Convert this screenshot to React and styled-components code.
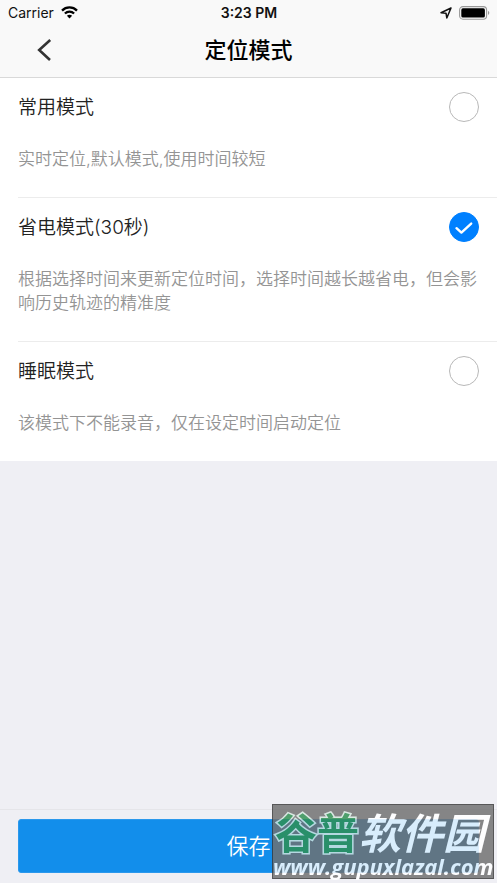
import React, { useState } from 'react';
import styled, { createGlobalStyle } from 'styled-components';

const GlobalStyle = createGlobalStyle`
  * {
    box-sizing: border-box;
  }
  body {
    margin: 0;
    background-color: #efeff4;
    font-family: Inter, "Noto Sans CJK SC", sans-serif;
  }
`;

const Page = styled.div`
  display: flex;
  flex-direction: column;
  min-height: 100vh;
`;

const Header = styled.header`
  background-color: #f9f9f9;
  border-bottom: 1px solid #d9d9d9;
`;

const StatusBar = styled.div`
  display: grid;
  grid-template-columns: 1fr auto 1fr;
  align-items: center;
  height: 25px;
  padding: 0 7px 0 8px;
  font-size: 14px;
  color: #111;
`;

const StatusGroup = styled.div`
  display: flex;
  align-items: center;
  justify-content: ${(props) => props.$end ? 'flex-end' : 'flex-start'};
  gap: 7px;
`;

const Time = styled.span`
  font-size: 14px;
  font-weight: 600;
`;

const NavBar = styled.div`
  display: grid;
  grid-template-columns: 1fr auto 1fr;
  align-items: center;
  height: 52px;
  padding-bottom: 2px;
`;

const BackButton = styled.button`
  display: flex;
  width: 32px;
  margin-left: 28px;
  padding: 8px;
  border: 0;
  background: none;
  cursor: pointer;
`;

const Title = styled.h1`
  margin: 0;
  font-size: 22px;
  line-height: 32px;
  font-weight: 500;
  color: #000;
`;

const List = styled.main`
  flex: 1;
`;

const Modes = styled.div`
  padding-left: 18px;
  background-color: white;
`;

const Mode = styled.label`
  display: block;
  padding: 14px 18px 26px 0;
  border-bottom: 1px solid #ececec;
  cursor: pointer;
  &:last-child {
    border-bottom: 0;
  }
`;

const ModeHead = styled.span`
  display: flex;
  align-items: flex-end;
  justify-content: space-between;
  margin-bottom: 25px;
`;

const ModeName = styled.span`
  font-size: 19px;
  line-height: 28px;
  font-weight: 350;
  color: #222;
`;

const ModeText = styled.span`
  display: block;
  font-size: 17px;
  line-height: 24px;
  font-weight: 350;
  color: #949494;
`;

const RadioWrap = styled.span`
  display: grid;
  width: 30px;
  height: 30px;
  & > * {
    grid-area: 1 / 1;
  }
`;

const Radio = styled.input`
  appearance: none;
  width: 30px;
  height: 30px;
  margin: 0;
  border: 1px solid #b8b8b8;
  border-radius: 50%;
  background-color: white;
  &:checked {
    border-color: #0080ff;
    background-color: #0080ff;
  }
`;

const Footer = styled.footer`
  padding: 9px 18px 10px;
  border-top: 1px solid #e5e5e9;
`;

const SaveButton = styled.button`
  width: 100%;
  height: 54px;
  padding: 0 0 4px;
  border: 1px solid #2b98ec;
  border-radius: 3px;
  background-color: #128eeb;
  color: white;
  font-family: inherit;
  font-size: 22px;
  font-weight: 350;
  cursor: pointer;
`;

const Watermark = styled.div`
  position: fixed;
  right: 3px;
  bottom: 4px;
  width: 222px;
  height: 75px;
  border: 1px solid #3a3a3a;
  background-color: #717171;
  opacity: 0.84;
  color: white;
  white-space: nowrap;
  pointer-events: none;
`;

const WatermarkName = styled.div`
  padding: 8px 0 0 2px;
  font-size: 42px;
  line-height: 42px;
  font-weight: 700;
`;

const Green = styled.span`
  color: #2f8f52;
  -webkit-text-stroke: 3px #d5e6de;
  paint-order: stroke fill;
`;

const White = styled.em`
  font-weight: 700;
`;

const WatermarkSite = styled.div`
  font-family: "Open Sans", "Noto Sans", sans-serif;
  font-size: 22px;
  line-height: 22px;
  font-weight: 700;
  font-style: italic;
`;

const WifiIcon = () => (
  <svg width="17" height="13" viewBox="0 0 17 13" aria-hidden="true">
    <g fill="none" stroke="#000" strokeWidth="2.3">
      <path d="M1 4.6C5.2 0.4 11.8 0.4 16 4.6" />
      <path d="M3.9 7.5C6.5 5 10.5 5 13.1 7.5" />
    </g>
    <path d="M8.5 12.4L5.9 9.8C7.4 8.4 9.6 8.4 11.1 9.8Z" />
  </svg>
);

const LocationIcon = () => (
  <svg width="12" height="12" viewBox="0 0 12 12" aria-hidden="true">
    <path d="M11 1L1 5.7L6 6.2L6.8 11Z" fill="none" stroke="#111" strokeWidth="1.5" strokeLinejoin="round" />
  </svg>
);

const BatteryIcon = () => (
  <svg width="31" height="14" viewBox="0 0 31 14" aria-hidden="true">
    <rect x="0.6" y="0.6" width="27" height="12.6" rx="3.4" fill="none" stroke="#999" strokeWidth="1.1" />
    <rect x="2.3" y="2.3" width="23.6" height="9.2" rx="1.6" />
    <path d="M29 4.8C30.8 5.6 30.8 8.2 29 9Z" fill="#999" />
  </svg>
);

const BackIcon = () => (
  <svg width="16" height="22" viewBox="0 0 16 22" aria-hidden="true">
    <path d="M14.2 1L3.2 11L14 21" fill="none" stroke="#333" strokeWidth="2.6" />
  </svg>
);

const CheckIcon = () => (
  <svg width="30" height="30" viewBox="0 0 30 30" aria-hidden="true">
    <path d="M7.5 16.2L12.4 20.6L22.2 11.6" fill="none" stroke="#fff" strokeWidth="2.4" strokeLinecap="round" strokeLinejoin="round" />
  </svg>
);

const modes = [
  { id: 'normal', name: '常用模式', text: '实时定位,默认模式,使用时间较短' },
  { id: 'saving', name: '省电模式(30秒)', text: '根据选择时间来更新定位时间，选择时间越长越省电，但会影响历史轨迹的精准度' },
  { id: 'sleep', name: '睡眠模式', text: '该模式下不能录音，仅在设定时间启动定位' },
];

const App = () => {
  const [selected, setSelected] = useState('saving');

  return (
    <Page lang="zh-CN">
      <GlobalStyle />
      <Header>
        <StatusBar>
          <StatusGroup>Carrier <WifiIcon /></StatusGroup>
          <Time>3:23 PM</Time>
          <StatusGroup $end><LocationIcon /><BatteryIcon /></StatusGroup>
        </StatusBar>
        <NavBar>
          <BackButton type="button" aria-label="返回"><BackIcon /></BackButton>
          <Title>定位模式</Title>
        </NavBar>
      </Header>
      <List>
        <Modes role="radiogroup" aria-label="定位模式">
          {modes.map(({ id, name, text }) => (
            <Mode key={id} htmlFor={id}>
              <ModeHead>
                <ModeName>{name}</ModeName>
                <RadioWrap>
                  <Radio
                    type="radio"
                    name="mode"
                    id={id}
                    checked={selected === id}
                    onChange={() => setSelected(id)}
                  />
                  {selected === id && <CheckIcon />}
                </RadioWrap>
              </ModeHead>
              <ModeText>{text}</ModeText>
            </Mode>
          ))}
        </Modes>
      </List>
      <Footer>
        <SaveButton type="button">保存</SaveButton>
      </Footer>
      <Watermark>
        <WatermarkName><Green>谷普</Green><White>软件园</White></WatermarkName>
        <WatermarkSite>www.gupuxlazal.com</WatermarkSite>
      </Watermark>
    </Page>
  );
};

export default App;
